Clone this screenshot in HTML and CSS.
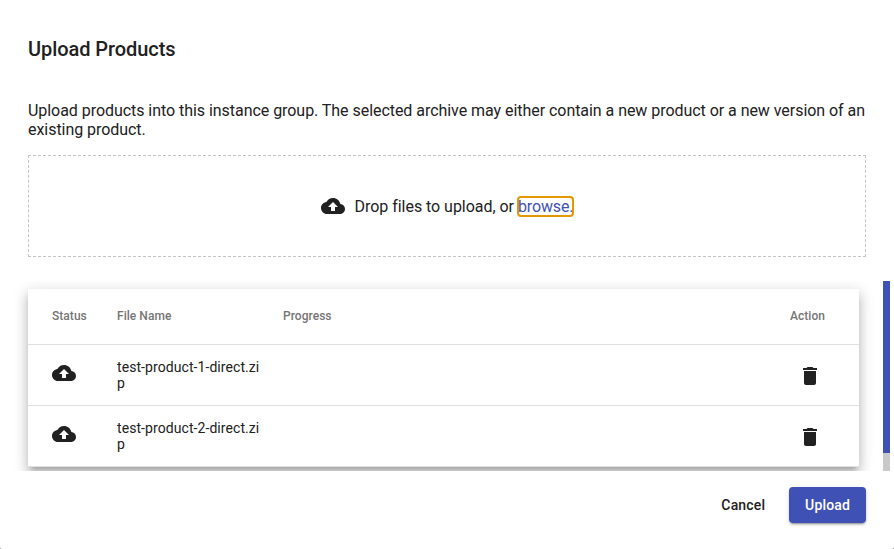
FILE: index.html
```html
<!DOCTYPE html>
<html lang="en">
<head>
<meta charset="utf-8">
<title>Upload Products</title>
<link rel="stylesheet" href="styles.css">
</head>
<body>
<svg class="defs" width="0" height="0">
  <symbol id="cloud" viewBox="0 0 24 24"><path d="M19.35 10.04C18.67 6.59 15.64 4 12 4 9.11 4 6.6 5.64 5.35 8.04 2.34 8.36 0 10.91 0 14c0 3.31 2.69 6 6 6h13c2.76 0 5-2.24 5-5 0-2.64-2.05-4.78-4.65-4.96zM14 13v4h-4v-4H7l5-5 5 5h-3z"/></symbol>
  <symbol id="trash" viewBox="0 0 24 24"><path d="M6 19c0 1.1.9 2 2 2h8c1.1 0 2-.9 2-2V7H6v12zM19 4h-3.500l-1-1h-5l-1 1H5v2h14V4z"/></symbol>
</svg>
<main class="dialog">
  <h1 class="title">Upload Products</h1>
  <p class="intro">Upload products into this instance group. The selected archive may either contain a new product or a new version of an existing product.</p>
  <div class="dropzone">
    <svg class="icon"><use href="#cloud"/></svg>
    <span class="drop-text">Drop files to upload, or <a class="browse">browse.</a></span>
  </div>
  <section class="scroller">
    <div class="viewport">
      <div class="table">
        <div class="row head"><span>Status</span><span>File Name</span><span>Progress</span><span>Action</span></div>
        <div class="row"><svg class="icon"><use href="#cloud"/></svg><span class="name">test-product-1-direct.zip</span><span></span><svg class="icon trash"><use href="#trash"/></svg></div>
        <div class="row"><svg class="icon"><use href="#cloud"/></svg><span class="name">test-product-2-direct.zip</span><span></span><svg class="icon trash"><use href="#trash"/></svg></div>
      </div>
    </div>
    <div class="track"><div class="thumb"></div></div>
  </section>
  <footer class="actions">
    <button class="button">Cancel</button>
    <button class="button primary">Upload</button>
  </footer>
</main>
</body>
</html>
```

FILE: styles.css
```css
* { box-sizing: border-box; }
html { background: #888; }
body { margin: 0; color: #212121; font-family: Roboto, sans-serif; }
.defs { display: block; }
.dialog { display: flex; flex-direction: column; width: 894px; height: 549px; overflow: hidden; background: #fff; border-radius: 0 0 2px 2px; }
.title { margin: 33px 28px 0; font-size: 20px; line-height: 32px; font-weight: 500; letter-spacing: -0.07px; }
.intro { margin: 36px 28px 0; font-size: 16px; line-height: 19px; letter-spacing: -0.047px; }
.dropzone { display: flex; align-items: center; justify-content: center; gap: 10px; height: 102px; margin: 16px 28px 0; border: 1px dashed #c4c4c4; flex: none; }
.icon { width: 24px; height: 24px; fill: #212121; display: block; flex: none; }
.drop-text { font-size: 16px; line-height: 19px; letter-spacing: -0.035px; }
.browse { color: #3f51b5; outline: 2px solid #e59700; outline-offset: -1px; border-radius: 3px; letter-spacing: -0.12px; }
.scroller { display: flex; height: 190px; margin-top: 24px; flex: none; }
.viewport { width: 883px; padding: 8px 24px 0 28px; overflow: hidden; }
.table { background: #fff; box-shadow: 0 5px 5px -3px rgba(0,0,0,.2), 0 8px 10px 1px rgba(0,0,0,.14), 0 3px 14px 2px rgba(0,0,0,.12); }
.row { display: grid; grid-template-columns: 65px 166px 507px 45px; padding-left: 24px; height: 61px; align-items: center; border-bottom: 1px solid #e0e0e0; font-size: 14px; line-height: 16px; letter-spacing: 0.075px; }
.head { height: 56px; font-size: 12px; font-weight: 500; color: #757575; padding-bottom: 2px; letter-spacing: 0.04px; }
.row .icon { margin-top: -4px; }
.row .trash { margin: 2px 0 0 8px; }
.name { width: 143px; word-break: break-all; }
.track { width: 7px; background: #c9c9c9; }
.thumb { height: 172px; background: #3f51b5; }
.actions { display: flex; justify-content: flex-end; gap: 8px; padding: 16px 28px 0; }
.button { border: 0; border-radius: 4px; background: none; height: 36px; padding: 0 16px; font: 500 14px/36px Roboto, sans-serif; color: #212121; letter-spacing: 0.15px; }
.primary { color: #fff; background: #3f51b5; box-shadow: 0 3px 1px -2px rgba(0,0,0,.2), 0 2px 2px rgba(0,0,0,.14), 0 1px 5px rgba(0,0,0,.12); }
```
